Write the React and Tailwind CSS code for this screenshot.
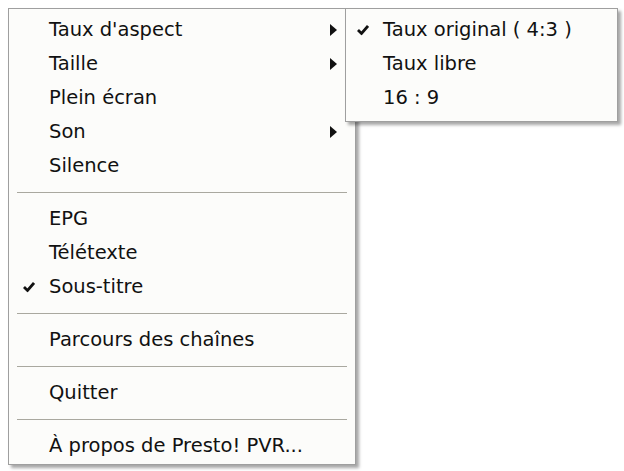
import React from "react";

const Check = () => (
  <svg width="12" height="11" viewBox="0 0 12 11" className="block">
    <path d="M1 5.5 L4.5 9 L11 1.5" fill="none" stroke="#111" strokeWidth="2.8" />
  </svg>
);

const Arrow = () => (
  <svg width="7" height="12" viewBox="0 0 7 12" className="block">
    <path d="M0 0 L7 6 L0 12 Z" fill="#111" />
  </svg>
);

const Item = ({ label, checked, submenu, indent = "pl-[40px]", checkPos = "left-[14px]" }) => (
  <div className={`relative flex items-center h-[34px] ${indent} pr-[18px]`}>
    {checked && (
      <span className={`absolute ${checkPos} top-1/2 -translate-y-1/2`}>
        <Check />
      </span>
    )}
    <span className="flex-1 whitespace-nowrap">{label}</span>
    {submenu && <Arrow />}
  </div>
);

const Separator = () => (
  <div className="flex items-center h-[19px] px-[8px]">
    <div className="h-px w-full bg-[#a9a89f]" />
  </div>
);

export default function App() {
  return (
    <div
      className="relative w-[624px] h-[471px] bg-white text-[19.5px] text-[#111]"
      style={{ fontFamily: '"DejaVu Sans", "Liberation Sans", sans-serif' }}
    >
      <div className="absolute left-[8px] top-[8px] w-[348px] h-[457px] bg-[#fcfcfa] border border-[#9f9f9f] pt-[4px] shadow-[3px_3px_3px_rgba(0,0,0,0.35)]">
        <Item label="Taux d'aspect" submenu />
        <Item label="Taille" submenu />
        <Item label="Plein écran" />
        <Item label="Son" submenu />
        <Item label="Silence" />
        <Separator />
        <Item label="EPG" />
        <Item label="Télétexte" />
        <Item label="Sous-titre" checked />
        <Separator />
        <Item label="Parcours des chaînes" />
        <Separator />
        <Item label="Quitter" />
        <Separator />
        <Item label="À propos de Presto! PVR..." />
      </div>

      <div className="absolute left-[345px] top-[8px] w-[273px] h-[114px] bg-[#fcfcfa] border border-[#9f9f9f] pt-[4px] shadow-[3px_3px_3px_rgba(0,0,0,0.35)]">
        <Item label="Taux original ( 4:3 )" checked indent="pl-[37px]" checkPos="left-[11px]" />
        <Item label="Taux libre" indent="pl-[37px]" />
        <Item label="16 : 9" indent="pl-[37px]" />
      </div>
    </div>
  );
}
